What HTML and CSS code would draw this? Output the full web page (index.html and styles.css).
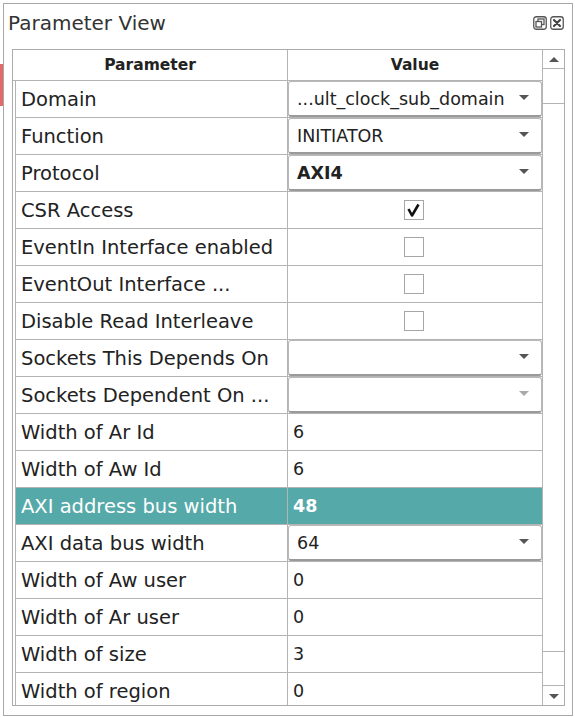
FILE: index.html
```html
<!DOCTYPE html>
<html>
<head>
<meta charset="utf-8">
<link rel="stylesheet" href="styles.css">
</head>
<body>
<div class="edge"><span class="edge-mark"></span></div>
<div class="window">
  <div class="titlebar">
    <span class="title">Parameter View</span>
    <span class="tools">
      <svg class="tool" width="14" height="14" viewBox="0 0 14 14"><rect x="0.75" y="0.75" width="12.5" height="12.5" rx="2.5" fill="none" stroke="#555" stroke-width="1.3"/><rect x="5" y="3" width="6" height="5.5" fill="none" stroke="#555" stroke-width="1.3"/><rect x="3" y="5.5" width="5.5" height="5.5" fill="#fff" stroke="#555" stroke-width="1.3"/></svg>
      <svg class="tool" width="14" height="14" viewBox="0 0 14 14"><rect x="0.75" y="0.75" width="12.5" height="12.5" rx="2.5" fill="none" stroke="#555" stroke-width="1.3"/><path d="M4 4 L10 10 M10 4 L4 10" stroke="#444" stroke-width="2.2" stroke-linecap="round"/></svg>
    </span>
  </div>
  <div class="frame">
    <div class="grid">
      <div class="head">
        <div class="hcell hcell-first">Parameter</div>
        <div class="hcell">Value</div>
      </div>
      <div class="row"><div class="pcell">Domain</div><div class="vcell"><div class="combo"><span>...ult_clock_sub_domain</span><span class="arrow"></span></div></div></div>
      <div class="row"><div class="pcell">Function</div><div class="vcell"><div class="combo"><span>INITIATOR</span><span class="arrow"></span></div></div></div>
      <div class="row"><div class="pcell">Protocol</div><div class="vcell"><div class="combo"><span class="strong">AXI4</span><span class="arrow"></span></div></div></div>
      <div class="row"><div class="pcell">CSR Access</div><div class="vcell center"><span class="check"><svg width="18" height="18" viewBox="0 0 18 18"><path d="M3.5 8 L7 14.5 L13.5 3.5" fill="none" stroke="#111" stroke-width="2.6" stroke-linejoin="round"/></svg></span></div></div>
      <div class="row"><div class="pcell">EventIn Interface enabled</div><div class="vcell center"><span class="check"></span></div></div>
      <div class="row"><div class="pcell">EventOut Interface ...</div><div class="vcell center"><span class="check"></span></div></div>
      <div class="row"><div class="pcell">Disable Read Interleave</div><div class="vcell center"><span class="check"></span></div></div>
      <div class="row"><div class="pcell">Sockets This Depends On</div><div class="vcell"><div class="combo"><span></span><span class="arrow"></span></div></div></div>
      <div class="row"><div class="pcell">Sockets Dependent On ...</div><div class="vcell"><div class="combo"><span></span><span class="arrow arrow-dis"></span></div></div></div>
      <div class="row"><div class="pcell">Width of Ar Id</div><div class="vcell text">6</div></div>
      <div class="row"><div class="pcell">Width of Aw Id</div><div class="vcell text">6</div></div>
      <div class="row row-sel"><div class="pcell">AXI address bus width</div><div class="vcell text strong">48</div></div>
      <div class="row"><div class="pcell">AXI data bus width</div><div class="vcell"><div class="combo"><span>64</span><span class="arrow"></span></div></div></div>
      <div class="row"><div class="pcell">Width of Aw user</div><div class="vcell text">0</div></div>
      <div class="row"><div class="pcell">Width of Ar user</div><div class="vcell text">0</div></div>
      <div class="row"><div class="pcell">Width of size</div><div class="vcell text">3</div></div>
      <div class="row"><div class="pcell">Width of region</div><div class="vcell text">0</div></div>
    </div>
    <div class="scroll">
      <div class="sbtn sbtn-up"><span class="tri-up"></span></div>
      <div class="track1"></div>
      <div class="thumb"></div>
      <div class="track2"></div>
      <div class="sbtn sbtn-down"><span class="tri-down"></span></div>
    </div>
  </div>
</div>
</body>
</html>
```
FILE: styles.css
```css
* { box-sizing: border-box; }
html, body { height: 717px; overflow: hidden; }
body {
  margin: 0;
  padding-top: 3px;
  display: flex;
  align-items: flex-start;
  background: #fff;
  font-family: "DejaVu Sans", "Open Sans", sans-serif;
  color: #222;
}
.edge { width: 3px; flex: none; }
.edge-mark { display: block; width: 3px; height: 42px; margin-top: 61px; background: #e26a6a; }
.window {
  width: 570px;
  height: 713px;
  border: 1px solid #a8a8a8;
  display: flex;
  flex-direction: column;
  flex: none;
}
.titlebar {
  height: 45px;
  flex: none;
  display: flex;
  justify-content: space-between;
  align-items: flex-start;
  padding: 6px 8px 0 4px;
}
.title { font-size: 20px; line-height: 26px; color: #333; }
.tools { display: flex; gap: 3px; margin-top: 6px; }
.tool { display: block; }
.frame {
  margin: 0 7px 0 8px;
  height: 657px;
  flex: none;
  border: 1px solid #ababab;
  display: flex;
  overflow: hidden;
}
.grid { width: 529px; flex: none; }
.head {
  display: grid;
  grid-template-columns: 275px 254px;
  height: 31px;
  border-bottom: 1px solid #b4b4b4;
}
.hcell {
  display: flex;
  align-items: center;
  justify-content: center;
  font-weight: bold;
  font-size: 15.5px;
  color: #222;
}
.hcell-first { border-right: 1px solid #b4b4b4; }
.row {
  display: grid;
  grid-template-columns: 275px 254px;
  height: 37px;
}
.pcell {
  margin-left: 2px;
  border-left: 1px solid #b4b4b4;
  border-right: 1px solid #b4b4b4;
  border-bottom: 1px solid #b4b4b4;
  padding-left: 5px;
  display: flex;
  align-items: center;
  font-size: 19.5px;
  white-space: nowrap;
}
.vcell {
  border-bottom: 1px solid #b4b4b4;
  display: flex;
  align-items: center;
  font-size: 17.5px;
  white-space: nowrap;
}
.vcell.text { padding-left: 5px; }
.vcell.center { justify-content: center; padding-right: 2px; }
.strong { font-weight: bold; }
.row-sel .pcell, .row-sel .vcell { background: #55a9a8; color: #fff; }
.combo {
  flex: 1;
  align-self: stretch;
  border: 1px solid #b8b8b8;
  border-bottom: 2px solid #9a9a9a;
  border-radius: 3px;
  display: flex;
  align-items: center;
  justify-content: space-between;
  padding: 0 12px 0 8px;
}
.arrow {
  width: 0; height: 0;
  border-left: 5px solid transparent;
  border-right: 5px solid transparent;
  border-top: 5px solid #555;
  margin-top: -2px;
}
.arrow-dis { border-top-color: #aaa; }
.check {
  width: 20px;
  height: 20px;
  border: 1px solid #a6a6a6;
  display: flex;
  align-items: center;
  justify-content: center;
}
.check svg { display: block; }
.scroll {
  width: 22px;
  flex: none;
  border-left: 1px solid #b4b4b4;
  display: flex;
  flex-direction: column;
}
.sbtn { display: flex; align-items: center; justify-content: center; flex: none; }
.sbtn-up { height: 19px; border-bottom: 1px solid #b4b4b4; }
.sbtn-down { height: 21px; border-top: 1px solid #b4b4b4; }
.track1 { height: 34px; flex: none; }
.thumb { height: 549px; flex: none; border-top: 1px solid #b4b4b4; border-bottom: 1px solid #b4b4b4; }
.track2 { height: 33px; flex: none; }
.tri-up {
  width: 0; height: 0;
  border-left: 5px solid transparent;
  border-right: 5px solid transparent;
  border-bottom: 5px solid #555;
}
.tri-down {
  width: 0; height: 0;
  border-left: 5px solid transparent;
  border-right: 5px solid transparent;
  border-top: 5px solid #555;
}
```
